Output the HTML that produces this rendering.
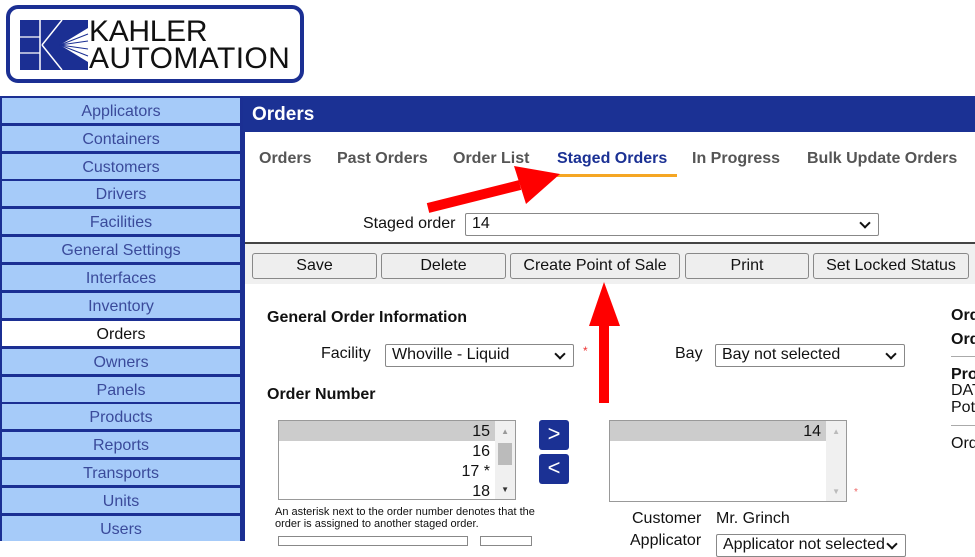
<!DOCTYPE html>
<html><head><style>
*{margin:0;padding:0;box-sizing:border-box}
body{width:975px;height:541px;overflow:hidden;background:#fff;font-family:"Liberation Sans",Arial,sans-serif;position:relative}
.a{position:absolute;white-space:nowrap}
.side{position:absolute;left:0;top:96px;width:243px;height:445px;background:#1b2f93}
.it{position:absolute;left:2px;width:238px;height:25px;background:#a6cbf9;color:#3a4a9a;font-size:16px;text-align:center;line-height:27px}
.it.on{background:#fff;color:#111}
.tab{position:absolute;top:150px;font-size:16px;font-weight:bold;color:#555}
.btn{position:absolute;top:253px;height:26px;background:#eee;border:1px solid #888;border-radius:3px;font-size:16px;text-align:center;line-height:24px;color:#111}
.sel{position:absolute;background:#fff;border:1px solid #888;border-radius:2px;font-size:16px;padding-left:6px;line-height:20px;color:#111}
.sel:after{content:"";position:absolute;right:9px;top:5px;width:6px;height:6px;border-right:2px solid #111;border-bottom:2px solid #111;transform:rotate(45deg)}
.lb{border:1px solid #999;background:#fff;position:absolute}
</style></head><body>
<!-- logo -->
<div class="a" style="left:6px;top:5px;width:298px;height:78px;border:4px solid #1b2f93;border-radius:12px"></div>
<svg class="a" style="left:20px;top:20px" width="70" height="50" viewBox="0 0 70 50">
<rect x="0" y="0" width="68" height="50" fill="#1b2f93"/>
<line x1="20" y1="0" x2="20" y2="50" stroke="#fff" stroke-width="1.5"/>
<line x1="22" y1="25" x2="42" y2="0" stroke="#fff" stroke-width="1.5"/>
<line x1="22" y1="25" x2="42" y2="50" stroke="#fff" stroke-width="1.5"/>
<line x1="0" y1="17" x2="20" y2="17" stroke="#fff" stroke-width="1.2"/>
<line x1="0" y1="33" x2="20" y2="33" stroke="#fff" stroke-width="1.2"/>
<polygon points="40,25 68,8 68,42" fill="#fff"/>
<line x1="40" y1="25" x2="68" y2="14" stroke="#1b2f93"/><line x1="40" y1="25" x2="68" y2="21" stroke="#1b2f93"/><line x1="40" y1="25" x2="68" y2="29" stroke="#1b2f93"/><line x1="40" y1="25" x2="68" y2="36" stroke="#1b2f93"/>
</svg>
<div class="a" style="left:89px;top:18px;font-size:30px;line-height:28px;color:#111;letter-spacing:-0.3px">KAHLER</div>
<div class="a" style="left:89px;top:45px;font-size:30px;line-height:28px;color:#111;letter-spacing:0.4px">AUTOMATION</div>
<!-- sidebar -->
<div class="side">
<div class="it" style="top:2px">Applicators</div>
<div class="it" style="top:30px">Containers</div>
<div class="it" style="top:58px">Customers</div>
<div class="it" style="top:85px">Drivers</div>
<div class="it" style="top:113px">Facilities</div>
<div class="it" style="top:141px">General Settings</div>
<div class="it" style="top:169px">Interfaces</div>
<div class="it" style="top:197px">Inventory</div>
<div class="it on" style="top:225px">Orders</div>
<div class="it" style="top:253px">Owners</div>
<div class="it" style="top:281px">Panels</div>
<div class="it" style="top:308px">Products</div>
<div class="it" style="top:336px">Reports</div>
<div class="it" style="top:364px">Transports</div>
<div class="it" style="top:392px">Units</div>
<div class="it" style="top:420px">Users</div>
</div>
<!-- header -->
<div class="a" style="left:243px;top:96px;width:732px;height:36px;background:#1b3194"></div>
<div class="a" style="left:252px;top:104px;font-size:19px;font-weight:bold;color:#fff">Orders</div>
<div class="a" style="left:243px;top:132px;width:2px;height:409px;background:#1b2f93"></div>
<div class="tab" style="left:259px">Orders</div>
<div class="tab" style="left:337px">Past Orders</div>
<div class="tab" style="left:453px">Order List</div>
<div class="tab" style="left:557px;color:#1b3194">Staged Orders</div>
<div class="tab" style="left:692px">In Progress</div>
<div class="tab" style="left:807px">Bulk Update Orders</div>
<div class="a" style="left:557px;top:174px;width:120px;height:3px;background:#f5a623"></div>
<div class="a" style="left:363px;top:215px;font-size:16px;color:#111">Staged order</div>
<div class="sel" style="left:465px;top:213px;width:414px;height:23px">14</div>
<div class="a" style="left:245px;top:242px;width:730px;height:2px;background:#444"></div>
<div class="a" style="left:245px;top:244px;width:730px;height:40px;background:#f0f0f0"></div>
<div class="btn" style="left:252px;width:125px">Save</div>
<div class="btn" style="left:381px;width:125px">Delete</div>
<div class="btn" style="left:510px;width:170px">Create Point of Sale</div>
<div class="btn" style="left:685px;width:124px">Print</div>
<div class="btn" style="left:813px;width:156px">Set Locked Status</div>
<!-- form -->
<div class="a" style="left:267px;top:309px;font-size:16px;font-weight:bold;color:#111">General Order Information</div>
<div class="a" style="left:321px;top:345px;font-size:16px;color:#111">Facility</div>
<div class="sel" style="left:385px;top:344px;width:189px;height:23px">Whoville - Liquid</div>
<div class="a" style="left:583px;top:344px;font-size:12px;color:#e33">*</div>
<div class="a" style="left:675px;top:345px;font-size:16px;color:#111">Bay</div>
<div class="sel" style="left:715px;top:344px;width:190px;height:23px">Bay not selected</div>
<div class="a" style="left:267px;top:386px;font-size:16px;font-weight:bold;color:#111">Order Number</div>
<div class="lb" style="left:278px;top:420px;width:238px;height:80px">
<div class="a" style="left:0;top:0;width:216px;height:20px;background:#ccc"></div>
<div class="a" style="right:25px;top:1px;font-size:16px;line-height:20px;color:#111;text-align:right">15<br>16<br>17 *<br>18</div>
<div class="a" style="right:0;top:0;width:20px;height:78px;background:#f0f0f0"></div>
<div class="a" style="right:3px;top:22px;width:14px;height:22px;background:#bbb"></div>
<div class="a" style="right:6px;top:6px;font-size:8px;color:#999">▲</div>
<div class="a" style="right:6px;top:64px;font-size:8px;color:#333">▼</div>
</div>
<div class="a" style="left:539px;top:420px;width:30px;height:30px;background:#1b3194;border-radius:3px;color:#fff;font-size:22px;text-align:center;line-height:28px">&gt;</div>
<div class="a" style="left:539px;top:454px;width:30px;height:30px;background:#1b3194;border-radius:3px;color:#fff;font-size:22px;text-align:center;line-height:28px">&lt;</div>
<div class="lb" style="left:609px;top:420px;width:238px;height:82px">
<div class="a" style="left:0;top:0;width:216px;height:20px;background:#ccc"></div>
<div class="a" style="right:25px;top:1px;font-size:16px;line-height:20px;color:#111">14</div>
<div class="a" style="right:0;top:0;width:20px;height:80px;background:#f0f0f0"></div>
<div class="a" style="right:6px;top:6px;font-size:8px;color:#bbb">▲</div>
<div class="a" style="right:6px;top:66px;font-size:8px;color:#bbb">▼</div>
</div>
<div class="a" style="left:854px;top:487px;font-size:10px;color:#e66">*</div>
<div class="a" style="left:275px;top:506px;font-size:11px;line-height:12px;color:#111">An asterisk next to the order number denotes that the<br>order is assigned to another staged order.</div>
<div class="a" style="left:278px;top:536px;width:190px;height:10px;border:1px solid #888"></div>
<div class="a" style="left:480px;top:536px;width:52px;height:10px;border:1px solid #888"></div>
<div class="a" style="left:632px;top:510px;font-size:16px;color:#111">Customer</div>
<div class="a" style="left:716px;top:510px;font-size:16px;color:#111">Mr. Grinch</div>
<div class="a" style="left:630px;top:532px;font-size:16px;color:#111">Applicator</div>
<div class="sel" style="left:716px;top:534px;width:190px;height:23px">Applicator not selected</div>
<!-- right col -->
<div class="a" style="left:951px;top:307px;font-size:16px;font-weight:bold;color:#111">Order</div>
<div class="a" style="left:951px;top:331px;font-size:16px;font-weight:bold;color:#111">Order</div>
<div class="a" style="left:951px;top:356px;width:24px;height:1px;background:#aaa"></div>
<div class="a" style="left:951px;top:366px;font-size:16px;font-weight:bold;color:#111">Prod</div>
<div class="a" style="left:951px;top:382px;font-size:16px;color:#111;line-height:17px">DATA<br>Pota</div>
<div class="a" style="left:951px;top:425px;width:24px;height:1px;background:#aaa"></div>
<div class="a" style="left:951px;top:435px;font-size:16px;color:#111">Order</div>
<!-- arrows -->
<svg class="a" style="left:0;top:0" width="975" height="541">
<line x1="428" y1="208" x2="520" y2="185" stroke="#f00" stroke-width="10"/>
<polygon points="560,174 514,166 526,204" fill="#f00"/>
<line x1="604" y1="403" x2="604" y2="320" stroke="#f00" stroke-width="10"/>
<polygon points="604,282 589,326 620,326" fill="#f00"/>
</svg>
</body></html>
